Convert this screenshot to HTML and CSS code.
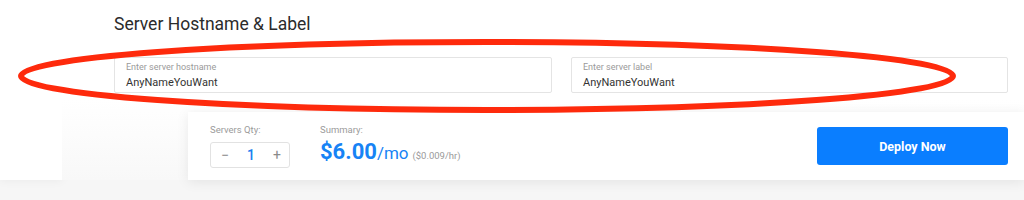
FILE: index.html
```html
<!DOCTYPE html>
<html lang="en">
<head>
    <meta charset="UTF-8">
    <title>Deploy Server</title>
    <link rel="stylesheet" href="styles.css">
</head>
<body>
    <div class="page">
        <div class="sidebar"></div>

        <div class="main">
            <h2 class="title">Server Hostname &amp; Label</h2>
            <div class="fields">
                <label class="field">
                    <span class="field-label">Enter server hostname</span>
                    <span class="field-value">AnyNameYouWant</span>
                </label>
                <label class="field">
                    <span class="field-label">Enter server label</span>
                    <span class="field-value">AnyNameYouWant</span>
                </label>
            </div>

            <div class="deploy-bar">
                <div class="qty">
                    <div class="small-label">Servers Qty:</div>
                    <div class="stepper">
                        <span class="step">&minus;</span>
                        <span class="count">1</span>
                        <span class="step">+</span>
                    </div>
                </div>
                <div class="summary">
                    <div class="small-label">Summary:</div>
                    <div class="price">
                        <span class="amount">$6.00</span><span class="per">/mo</span>
                        <span class="hourly">($0.009/hr)</span>
                    </div>
                </div>
                <button class="deploy-btn">Deploy Now</button>
            </div>
        </div>
    </div>

    <!-- red marker circled round the two fields -->
    <svg class="marker" width="1024" height="200" viewBox="0 0 1024 200">
        <ellipse cx="487" cy="76" rx="466" ry="34" fill="none" stroke="#fe2a0c" stroke-width="6"/>
    </svg>
</body>
</html>
```

FILE: styles.css
```css
body {
    margin: 0;
    background: #f6f6f6;
    font-family: 'Roboto', 'Liberation Sans', sans-serif;
    color: #333;
    overflow: hidden;
}

.page {
    display: flex;
    height: 200px;
}

.sidebar {
    width: 62px;
    height: 180px;
    background: #fff;
    box-shadow: 0 0 10px rgba(0, 0, 0, 0.06);
    flex-shrink: 0;
}

.main {
    flex: 1;
    background: linear-gradient(#fff, #fff 100px, #f8f8f8);
    height: 180px;
    padding-left: 52px;
    padding-right: 16px;
}

.title {
    margin: 12px 0 0;
    font-size: 17.5px;
    font-weight: 400;
    color: #2b2b2b;
    line-height: 24px;
}

.fields {
    display: grid;
    grid-template-columns: 438px 437px;
    column-gap: 19px;
    margin-top: 21px;
}

.field {
    display: flex;
    flex-direction: column;
    height: 36px;
    box-sizing: border-box;
    border: 1px solid #e4e4e4;
    border-radius: 2px;
    background: #fff;
    padding: 4px 11px 0;
}

.field-label {
    font-size: 9px;
    color: #9a9a9a;
    line-height: 11px;
}

.field-value {
    font-size: 11px;
    color: #333;
    line-height: 15px;
    margin-top: 2px;
}

.deploy-bar {
    display: flex;
    align-items: flex-start;
    margin: 19px -16px 0 74px;
    height: 68px;
    box-sizing: border-box;
    background: #fff;
    box-shadow: 0 2px 12px rgba(0, 0, 0, 0.08);
    padding: 12px 16px 0 22px;
}

.small-label {
    font-size: 9.5px;
    color: #9b9b9b;
    line-height: 12px;
}

.stepper {
    display: flex;
    align-items: center;
    justify-content: space-between;
    width: 80px;
    height: 26px;
    box-sizing: border-box;
    margin-top: 6px;
    border: 1px solid #e2e2e2;
    border-radius: 3px;
    padding: 0 8px 0 10px;
}

.step {
    font-size: 14px;
    color: #8a8a8a;
}

.count {
    font-size: 14px;
    font-weight: 500;
    color: #1a7ff0;
}

.summary {
    margin-left: 30px;
}

.price {
    margin-top: 3px;
    color: #1783f5;
    white-space: nowrap;
}

.amount {
    font-size: 22px;
    font-weight: 700;
}

.per {
    font-size: 17px;
}

.hourly {
    font-size: 9.5px;
    color: #9a9a9a;
}

.deploy-btn {
    margin-left: auto;
    margin-top: 3px;
    width: 191px;
    height: 38px;
    border: none;
    border-radius: 3px;
    background: #0a7eff;
    color: #fff;
    font-family: 'Roboto', 'Liberation Sans', sans-serif;
    font-size: 12.5px;
    font-weight: 700;
    cursor: pointer;
}

.marker {
    position: absolute;
    top: 0;
    left: 0;
    pointer-events: none;
}
```
